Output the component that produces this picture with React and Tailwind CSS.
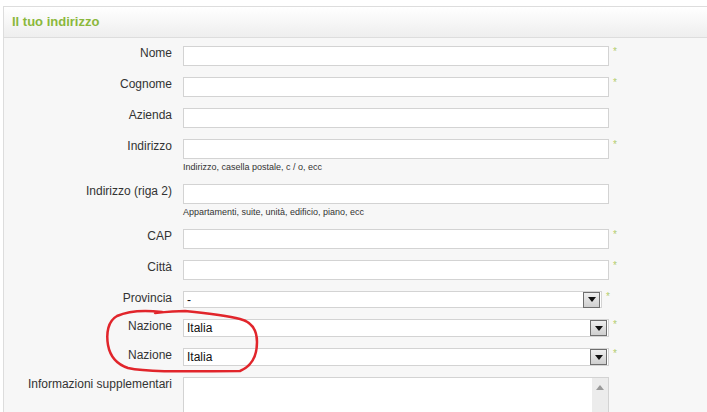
import React from 'react';

const Star = () => (
    <span className="ml-[4px] mt-[1px] text-[10px] leading-[10px] text-[#b3cd6e]">*</span>
);

const Arrow = () => (
    <div className="w-[17px] h-[16px] mr-[1px] border border-[#6e6e6e] bg-gradient-to-b from-[#efefef] to-[#cfcfcf] flex items-center justify-center">
        <svg width="8" height="5" viewBox="0 0 8 5"><path d="M0 0H8L4 5Z" fill="#111" /></svg>
    </div>
);

const Row = ({ label, children, help }) => (
    <div className="flex items-start">
        <div className="w-[168px] text-right text-[12px] leading-[14px] text-[#333]">{label}</div>
        <div className="ml-[11px]">
            <div className="flex items-start">{children}</div>
            {help && <div className="mt-[3px] text-[9px] leading-[11px] text-[#333]">{help}</div>}
        </div>
    </div>
);

const Input = () => <div className="w-[426px] h-[20px] border border-[#d3d3d3] bg-white" />;

const Select = ({ value, w, h }) => (
    <div className={`${w} ${h} border border-[#d3d3d3] bg-white flex items-center pl-[3px] text-[12px] text-[#111]`}>
        <span>{value}</span>
        <span className="ml-auto"><Arrow /></span>
    </div>
);

export default function App() {
    const fields = [
        { label: 'Nome', req: true },
        { label: 'Cognome', req: true },
        { label: 'Azienda' },
        { label: 'Indirizzo', req: true, help: 'Indirizzo, casella postale, c / o, ecc' },
        { label: 'Indirizzo (riga 2)', help: 'Appartamenti, suite, unità, edificio, piano, ecc' },
        { label: 'CAP', req: true },
        { label: 'Città', req: true },
    ];

    return (
        <div className="relative min-h-screen h-[412px] overflow-hidden bg-white pt-[6px] pl-[3px] font-['Liberation_Sans',Arial,sans-serif]">
            <div className="h-full border-l border-t border-[#dddddd] bg-[#f7f7f7]">
                <div className="h-[31px] px-[8px] flex items-center border-b border-[#dddddd] bg-gradient-to-b from-white to-[#eeeeee] text-[13px] font-bold text-[#8bb83c]">
                    Il tuo indirizzo
                </div>

                <div className="pt-[8px] flex flex-col gap-[11px]">
                    {fields.map(f => (
                        <Row key={f.label} label={f.label} help={f.help}>
                            <Input />
                            {f.req && <Star />}
                        </Row>
                    ))}

                    <Row label="Provincia">
                        <Select value="-" w="w-[419px]" h="h-[17px]" />
                        <Star />
                    </Row>
                    <Row label="Nazione">
                        <Select value="Italia" w="w-[426px]" h="h-[18px]" />
                        <Star />
                    </Row>
                    <Row label="Nazione">
                        <Select value="Italia" w="w-[426px]" h="h-[18px]" />
                        <Star />
                    </Row>

                    <Row label="Informazioni supplementari">
                        <div className="w-[426px] h-[60px] border border-[#d3d3d3] bg-white flex justify-end">
                            <div className="w-[16px] h-full bg-[#ececec] flex justify-center pt-[7px]">
                                <svg width="8" height="5" viewBox="0 0 8 5"><path d="M0 5H8L4 0Z" fill="#9a9a9a" /></svg>
                            </div>
                        </div>
                    </Row>
                </div>
            </div>

            {/* hand drawn red circle */}
            <svg className="absolute inset-0 pointer-events-none" width="707" height="412" viewBox="0 0 707 412">
                <path
                    d="M162 312 C145 310 128 311 117 316 C108 321 106 333 108 345 C110 356 116 364 128 368 C150 373 200 371 240 371 C252 366 257 355 257 342 C257 330 252 322 240 319 C225 315 205 313 185 311 C175 311 165 312 155 313"
                    fill="none" stroke="#e1252b" strokeWidth="2.5" strokeLinecap="round" />
            </svg>
        </div>
    );
}
